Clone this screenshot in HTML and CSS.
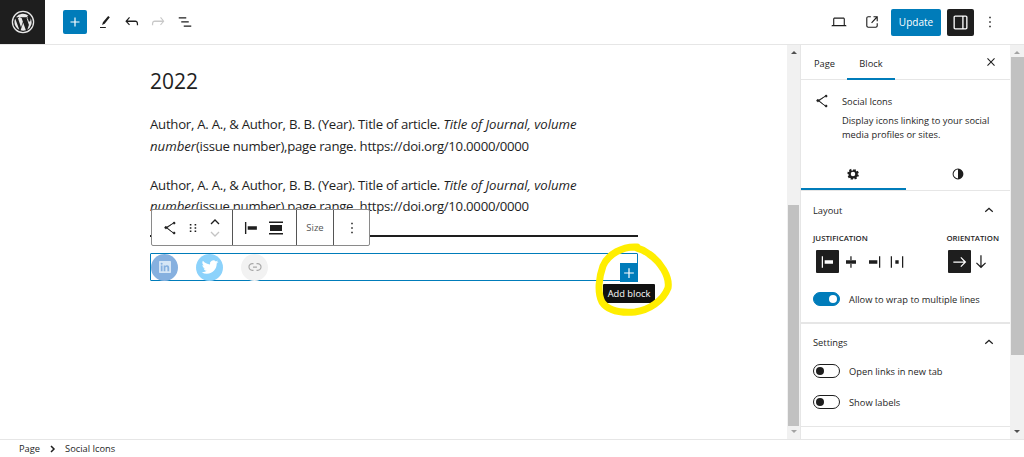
FILE: index.html
```
<!DOCTYPE html>
<html lang="en">
<head>
<meta charset="utf-8">
<title>Edit Page</title>
<link rel="stylesheet" href="styles.css">
</head>
<body>
<div class="app">
  <header class="topbar">
    <div class="logo">
      <svg width="24" height="24" viewBox="0 0 24 24"><circle cx="12" cy="12" r="10.6" fill="none" stroke="#e8e8e8" stroke-width="1.3"/><path fill="#e8e8e8" d="M3.4 12c0 3.4 2 6.3 4.9 7.7L4.2 8.5A8.6 8.6 0 0 0 3.4 12zm14.3-.4c0-1-.4-1.800-.7-2.300-.5-.7-.9-1.300-.9-2 0-.8.6-1.500 1.400-1.500h.1A8.600 8.600 0 0 0 5 7.300h.6c.9 0 2.300-.1 2.300-.1.500 0 .5.700 0 .7 0 0-.5.100-1 .1l3.100 9.300 1.900-5.600-1.300-3.700c-.5 0-.9-.1-.9-.1-.5 0-.4-.8 0-.7 0 0 1.400.1 2.300.1h2.300s1.400-.1 2.300-.1c.5 0 .5.700 0 .7 0 0-.5.100-1 .1l3.100 9.200.9-2.800c.4-1.200.6-2 .6-2.800zM12.200 12.800l-2.600 7.500a8.600 8.600 0 0 0 5.300-.1.800.8 0 0 1-.1-.2zM19.500 8c0 .3.100.6.100 1 0 .9-.2 1.800-.7 3.100l-2.600 7.600A8.600 8.600 0 0 0 19.500 8z"/></svg>
    </div>
    <div class="tools">
      <button class="inserter" aria-label="Add"><svg width="18" height="18" viewBox="0 0 24 24"><path fill="#fff" d="M11.200 6h1.600v5.200H18v1.600h-5.200V18h-1.600v-5.200H6v-1.600h5.200z"/></svg></button>
      <svg class="tool pen" viewBox="0 0 24 24"><path fill="#1e1e1e" d="M17.800 6.400l-2-1.500-6.300 7.500-1 3.100 3.100-1.300zM6 18h7v1.300H6z"/></svg>
      <svg class="tool" viewBox="0 0 24 24"><path fill="#1e1e1e" d="M18.300 11.700c-.6-.6-1.400-.9-2.300-.9H6.700l2.900-3.300-1.100-1-4.500 5L8.500 16.500l1-1-2.700-3.100H16c.5 0 .9.200 1.200.5.400.4.600 1.200.6 2.300v1.300h1.500v-1.300c0-1.500-.3-2.700-1-3.500z" transform="translate(0 -.5)"/></svg>
      <svg class="tool" viewBox="0 0 24 24"><path fill="#c8c8c8" d="M15.600 6.500l-1.100 1 2.900 3.300H8c-.9 0-1.700.3-2.300.9-.7.800-1 2-1 3.500v1.300h1.500v-1.300c0-1.100.2-1.900.6-2.300.3-.3.700-.5 1.200-.5h9.200l-2.700 3.100 1 1 4.100-5z" transform="translate(0 -.5)"/></svg>
      <svg class="tool" viewBox="0 0 24 24"><path fill="#1e1e1e" d="M5 6.200h9v1.500H5zM8 11.200h9v1.500H8zM11 16.200h9v1.500h-9z" transform="translate(-.5 0)"/></svg>
    </div>
    <div class="actions">
      <svg class="act" viewBox="0 0 24 24"><path fill="#1e1e1e" d="M20.500 16h-.7V8c0-1.100-.9-2-2-2H6.200c-1.100 0-2 .9-2 2v8h-.7c-.8 0-1.500.7-1.500 1.500h20c0-.8-.7-1.500-1.500-1.500zM5.700 8c0-.3.200-.5.500-.5h11.600c.3 0 .5.200.5.500v8H5.700z"/></svg>
      <svg class="act" viewBox="0 0 24 24"><path fill="#1e1e1e" d="M18.200 17c0 .7-.6 1.200-1.200 1.200H7c-.7 0-1.200-.6-1.200-1.200V7c0-.7.600-1.200 1.200-1.200h3.500V4.300H7C5.500 4.300 4.300 5.500 4.300 7v10c0 1.500 1.200 2.700 2.700 2.700h10c1.500 0 2.700-1.200 2.700-2.700v-3.500h-1.500zM14 4.300v1.500h3.200l-6.300 6.700 1.100 1 6.200-6.600V11h1.500V4.300z"/></svg>
      <button class="update">Update</button>
      <button class="panel" aria-label="Settings"><svg viewBox="0 0 24 24"><path fill="#fff" d="M18 4H6c-1.100 0-2 .9-2 2v12c0 1.100.9 2 2 2h12c1.100 0 2-.9 2-2V6c0-1.100-.9-2-2-2zM5.500 18V6c0-.3.200-.5.500-.5h8v13H6c-.3 0-.5-.2-.5-.5zm13 0c0 .3-.2.500-.5.500h-2.500v-13H18c.3 0 .5.200.5.500z"/></svg></button>
      <svg class="more" viewBox="0 0 24 24"><path fill="#1e1e1e" d="M11 5h2v2h-2zM11 11h2v2h-2zM11 17h2v2h-2z"/></svg>
    </div>
  </header>

  <div class="workspace">
    <main class="editor">
      <div class="canvas">
        <h2 class="heading">2022</h2>
        <p class="ref">Author, A. A., &amp; Author, B. B. (Year). Title of article. <em>Title of Journal, volume number</em>(issue number),page range. https://doi.org/10.0000/0000</p>
        <p class="ref">Author, A. A., &amp; Author, B. B. (Year). Title of article. <em>Title of Journal, volume number</em>(issue number),page range. https://doi.org/10.0000/0000</p>
        <hr class="rule">
        <div class="social">
          <span class="si li"><svg width="16" height="16" viewBox="0 0 24 24"><path fill="#d6e6f6" d="M20 3H4c-.6 0-1 .4-1 1v16c0 .6.400 1 1 1h16c.6 0 1-.4 1-1V4c0-.6-.4-1-1-1zM8.300 18.300H5.700V9.700h2.600zM7 8.600a1.500 1.500 0 1 1 0-3 1.500 1.500 0 0 1 0 3zm11.300 9.700h-2.700v-4.200c0-1 0-2.300-1.400-2.300s-1.600 1.100-1.600 2.200v4.300H10V9.700h2.500v1.200c.4-.7 1.200-1.400 2.500-1.400 2.700 0 3.300 1.800 3.300 4.100z"/></svg></span>
          <span class="si tw"><svg width="20" height="20" viewBox="0 0 24 24"><path fill="#fff" d="M22.200 5.900c-.7.300-1.500.6-2.400.7.900-.5 1.500-1.300 1.800-2.300-.8.500-1.700.8-2.600 1a4.100 4.100 0 0 0-7 3.700C8.600 8.800 5.600 7.100 3.500 4.600a4.100 4.100 0 0 0 1.300 5.500c-.7 0-1.300-.2-1.900-.5v.1c0 2 1.400 3.600 3.300 4-.6.200-1.200.2-1.800.1.500 1.600 2 2.800 3.800 2.800A8.300 8.300 0 0 1 2 18.300a11.600 11.600 0 0 0 6.300 1.800c7.500 0 11.700-6.300 11.700-11.700v-.5c.9-.6 1.600-1.300 2.200-2z"/></svg></span>
          <span class="si lk"><svg width="18" height="18" viewBox="0 0 24 24"><path fill="#a8a8a8" d="M15.600 7.200H14v1.500h1.600c2 0 3.700 1.700 3.700 3.700s-1.700 3.700-3.700 3.700H14v1.500h1.600c2.800 0 5.200-2.300 5.200-5.200 0-2.900-2.400-5.200-5.200-5.200zM4.700 12.400c0-2 1.700-3.700 3.700-3.700H10V7.200H8.400c-2.900 0-5.200 2.300-5.200 5.200 0 2.900 2.300 5.200 5.200 5.200H10v-1.500H8.400c-2 0-3.700-1.700-3.700-3.700zm4.600.9h5.300v-1.500H9.300z" transform="translate(0 -.4)"/></svg></span>
        </div>
        <div class="block-toolbar">
          <div class="group g1">
            <svg width="24" height="24" viewBox="0 0 24 24"><path fill="#1e1e1e" d="M9 11.800l6.100-4.500c.100.400.400.800 1 .800s1-.4 1-1-.4-1-1-1-1 .4-1 1v.2L8.900 11c-.2-.4-.6-.6-1-.6-.7 0-1.200.6-1.200 1.200 0 .6.500 1.200 1.200 1.200.400 0 .8-.2 1-.6l6.200 4.600v.2c0 .6.400 1 1 1s1-.4 1-1-.4-1-1-1c-.5 0-.9.300-1 .8z" stroke="#1e1e1e" stroke-width=".7"/></svg>
            <svg width="24" height="24" viewBox="0 0 24 24" class="drag"><path fill="#1e1e1e" d="M8 7h2v2H8zM14 7h2v2h-2zM8 11h2v2H8zM14 11h2v2h-2zM8 15h2v2H8zM14 15h2v2h-2z" transform="translate(12 12) scale(.8) translate(-12 -12)"/></svg>
            <div class="movers">
              <svg width="24" height="12" viewBox="0 0 24 12"><path fill="none" stroke="#1e1e1e" stroke-width="1.300" d="M8 8l4-4 4 4"/></svg>
              <svg width="24" height="12" viewBox="0 0 24 12"><path fill="none" stroke="#c4c4c4" stroke-width="1.300" d="M8 4l4 4 4-4"/></svg>
            </div>
          </div>
          <div class="group g2">
            <svg width="24" height="24" viewBox="0 0 24 24"><path fill="#1e1e1e" d="M7 5.500h1.500v13H7zM10 10h10v4H10z" transform="translate(-.5 0)"/></svg>
            <svg width="24" height="24" viewBox="0 0 24 24"><path fill="#1e1e1e" d="M5 5.500h14V7H5zM6 9h12v6H6zM5 17h14v1.500H5z"/></svg>
          </div>
          <div class="group g3">Size</div>
          <div class="group g4"><svg width="24" height="24" viewBox="0 0 24 24"><path fill="#1e1e1e" d="M11 5h2v2h-2zM11 11h2v2h-2zM11 17h2v2h-2z"/></svg></div>
        </div>
        <div class="add-btn"><svg width="24" height="24" viewBox="0 0 24 24"><path fill="#fff" d="M11.200 5.500h1.600v5.700h5.700v1.600h-5.700v5.700h-1.600v-5.700H5.500v-1.600h5.700z"/></svg></div>
        <div class="tooltip">Add block</div>
        <svg class="marker" width="82" height="74" viewBox="0 0 82 74"><path fill="none" stroke="#ffee00" stroke-width="7" stroke-linecap="round" d="M44 5C30 4 15 12 10 24 6 35 4 50 9 60c6 9 20 11 33 10 14-2 28-11 33-24 2-11-7-26-19-34-4-3-8-5-12-6"/></svg>
      </div>
    </main>
    <div class="scrollbar sb-left">
      <span class="arrow up"></span>
      <span class="thumb"></span>
      <span class="arrow down"></span>
    </div>
    <aside class="sidebar">
      <div class="tabs">
        <span class="tab">Page</span>
        <span class="tab active">Block</span>
        <svg class="close" viewBox="0 0 24 24"><path fill="#1e1e1e" d="M13 12l4.200-4.200-1-1L12 11 7.800 6.800l-1 1L11 12l-4.200 4.200 1 1L12 13l4.200 4.200 1-1z"/></svg>
      </div>
      <div class="block-card">
        <svg viewBox="0 0 24 24"><path fill="#1e1e1e" d="M9 11.800l6.100-4.500c.100.400.400.800 1 .800s1-.4 1-1-.4-1-1-1-1 .4-1 1v.2L8.900 11c-.2-.4-.6-.6-1-.6-.7 0-1.200.6-1.200 1.200 0 .6.500 1.200 1.200 1.200.400 0 .8-.2 1-.6l6.200 4.600v.2c0 .6.400 1 1 1s1-.4 1-1-.4-1-1-1c-.5 0-.9.300-1 .8z" stroke="#1e1e1e" stroke-width=".7"/></svg>
        <div class="card-text">
          <div class="card-title">Social Icons</div>
          <div class="card-desc">Display icons linking to your social media profiles or sites.</div>
        </div>
      </div>
      <div class="subtabs">
        <span class="subtab active"><svg viewBox="0 0 24 24"><path fill="#1e1e1e" d="M19.800 13.300l-1.600-.7c.1-.4.100-.8 0-1.200l1.600-.7-1.400-2.900-1.700.7c-.3-.3-.6-.6-1-.8l.3-1.700h-3.300l-.6.100-.7 1.600c-.4 0-.8 0-1.200 0L9.500 5.100 6.600 6.500l.7 1.700c-.3.300-.6.600-.8 1l-1.700-.3-.1 3.200 1.700.7c0 .4 0 .8 0 1.200l-1.500.8 1.400 2.800 1.700-.7c.3.300.6.600 1 .8l-.3 1.700h3.200l.7-1.700c.4 0 .8 0 1.200 0l.7 1.600 2.900-1.400-.7-1.700c.3-.3.600-.6.800-1l1.700.3zM12 15a3 3 0 1 1 0-6 3 3 0 0 1 0 6z"/></svg></span>
        <span class="subtab"><svg viewBox="0 0 24 24"><path fill="#1e1e1e" d="M12 5.500a6.500 6.500 0 1 0 0 13 6.500 6.500 0 0 0 0-13zM6.700 12a5.300 5.300 0 0 1 5.300-5.300v10.600A5.300 5.300 0 0 1 6.700 12z"/></svg></span>
      </div>
      <section class="panel-sec layout">
        <div class="sec-head"><span>Layout</span><svg viewBox="0 0 24 24"><path fill="#1e1e1e" d="M6.500 13.800l5.500-5 5.500 5-1 1.100-4.500-4-4.500 4z"/></svg></div>
        <div class="controls">
          <div class="ctrl">
            <div class="cap">JUSTIFICATION</div>
            <div class="btns">
              <span class="ib on"><svg viewBox="0 0 24 24"><path fill="#fff" d="M4.500 5h1.500v14H4.500zM8 10h10v4H8z"/></svg></span>
              <span class="ib"><svg viewBox="0 0 24 24"><path fill="#1e1e1e" d="M11.200 5h1.500v4.500H11.200zM6 10h12v4H6zM11.200 14.500h1.500V19H11.200z"/></svg></span>
              <span class="ib"><svg viewBox="0 0 24 24"><path fill="#1e1e1e" d="M18 5h1.500v14H18zM6 10h10v4H6z"/></svg></span>
              <span class="ib"><svg viewBox="0 0 24 24"><path fill="#1e1e1e" d="M4.500 5H6v14H4.500zM18 5h1.500v14H18zM10 10h4v4h-4z"/></svg></span>
            </div>
          </div>
          <div class="ctrl">
            <div class="cap">ORIENTATION</div>
            <div class="btns">
              <span class="ib on"><svg viewBox="0 0 24 24"><path fill="#fff" d="M13.500 6l-1 1 4.100 4.300H4v1.500h12.600L12.500 17l1 1 6-6z"/></svg></span>
              <span class="ib"><svg viewBox="0 0 24 24"><path fill="#1e1e1e" d="M18 13.500l-1-1-4.300 4.100V4h-1.500v12.600L7 12.500l-1 1 6 6z"/></svg></span>
            </div>
          </div>
        </div>
        <div class="toggle-row"><span class="toggle on"></span><span>Allow to wrap to multiple lines</span></div>
      </section>
      <section class="panel-sec settings">
        <div class="sec-head"><span>Settings</span><svg viewBox="0 0 24 24"><path fill="#1e1e1e" d="M6.500 13.800l5.500-5 5.500 5-1 1.100-4.500-4-4.500 4z"/></svg></div>
        <div class="toggle-row"><span class="toggle"></span><span>Open links in new tab</span></div>
        <div class="toggle-row"><span class="toggle"></span><span>Show labels</span></div>
      </section>
    </aside>
    <div class="scrollbar sb-right">
      <span class="arrow up pale"></span>
      <span class="thumb"></span>
      <span class="arrow down dark"></span>
    </div>
  </div>

  <footer class="crumbs">
    <span>Page</span>
    <svg width="10" height="10" viewBox="0 0 10 10"><path fill="none" stroke="#1e1e1e" stroke-width="1.500" d="M3 2l3 3-3 3"/></svg>
    <span>Social Icons</span>
  </footer>
</div>
</body>
</html>
```
FILE: styles.css
```
* { box-sizing: border-box; }
html, body { margin: 0; height: 100%; overflow: hidden; }
body { font-family: "Open Sans", "Noto Sans", sans-serif; color: #1e1e1e; background: #fff; font-size: 13px; }
svg { display: block; flex: none; }
button { border: 0; padding: 0; font: inherit; cursor: pointer; }

.app { width: 1024px; height: 457px; display: flex; flex-direction: column; }

.topbar { height: 45px; flex: none; display: flex; align-items: center; border-bottom: 1px solid #e6e6e6; }
.logo { width: 45px; height: 44px; background: #1e1e1e; display: flex; align-items: center; justify-content: center; }
.tools { display: flex; align-items: center; margin-left: 18px; }
.inserter { width: 24px; height: 24px; background: #007cba; border-radius: 2px; display: flex; align-items: center; justify-content: center; margin-right: 8px; }
.tool { width: 20px; height: 20px; margin-right: 6.500px; }
.actions { margin-left: auto; display: flex; align-items: center; }
.act { width: 18px; height: 18px; margin-right: 10px; }
.act:first-child { margin-right: 15.500px; }
.update { width: 50px; height: 27px; background: #007cba; color: #fff; font-size: 10px; border-radius: 2px; margin: 0 6px 0 0; }
.panel { width: 27px; height: 27px; background: #1e1e1e; border-radius: 2px; display: flex; align-items: center; justify-content: center; }
.panel svg { width: 21px; height: 21px; }
.more { width: 18px; height: 18px; margin: 0 25px 0 7px; }

.workspace { flex: 1; min-height: 0; display: flex; }
.editor { flex: 1; min-width: 0; background: #fff; }
.canvas { position: relative; height: 100%; padding: 21px 0 0 150px; width: 100%; }
.heading { font-size: 21px; font-weight: 400; line-height: 30px; margin: 0 0 18px; }
.ref { width: 488px; margin: 0 0 17.500px; font-size: 13.200px; letter-spacing: -0.270px; line-height: 21.500px; }
.ref em { letter-spacing: -0.020px; }
.rule { width: 488px; height: 2px; margin: 2px 0 16px; border: 0; background: #1e1e1e; }
.social { width: 488px; height: 28px; border: 1.500px solid #007cba; border-radius: 1px; display: flex; align-items: center; gap: 18px; }
.si { width: 27px; height: 27px; border-radius: 50%; display: flex; align-items: center; justify-content: center; flex: none; }
.li { background: #86b0df; }
.tw { background: #8cd2fb; }
.lk { background: #f2f2f2; }

.block-toolbar { position: absolute; left: 151px; top: 164px; height: 37px; display: flex; background: #fff; border: 1px solid #8a8a8a; border-radius: 2px; }
.group { display: flex; align-items: center; height: 100%; border-left: 1px solid #555; }
.group:first-child { border-left: 0; }
.g1 { width: 80px; padding-left: 6px; }
.g1 .drag { margin-left: -1px; }
.movers { margin-left: -2px; display: flex; flex-direction: column; }
.g2 { width: 64px; padding-left: 6px; gap: 3px; }
.g2 svg:first-child { width: 22px; }
.g3 { width: 37px; justify-content: center; font-size: 9.500px; color: #555; }
.g4 { width: 36px; justify-content: center; }
.g4 svg { width: 18px; height: 20px; }

.add-btn { position: absolute; left: 620px; top: 218px; width: 18px; height: 19px; background: #007cba; display: flex; align-items: center; justify-content: center; }
.add-btn svg { width: 18px; height: 18px; }
.tooltip { position: absolute; left: 603px; top: 239px; width: 52px; height: 19px; background: #111; color: #fff; font-size: 9.300px; line-height: 19px; text-align: center; white-space: nowrap; border-radius: 1px; }
.marker { position: absolute; left: 593px; top: 197px; }

.scrollbar { flex: none; background: #f1f1f1; display: flex; flex-direction: column; align-items: center; position: relative; }
.sb-left { width: 13px; }
.sb-right { width: 14px; }
.thumb { background: #c1c1c1; position: absolute; left: 1px; right: 1px; }
.sb-left .thumb { top: 160px; height: 221px; }
.sb-right .thumb { top: 12px; height: 298px; left: 1px; right: 0; }
.arrow { position: absolute; width: 0; height: 0; border-left: 3px solid transparent; border-right: 3px solid transparent; }
.arrow.up { top: 6px; border-bottom: 3px solid #505050; }
.arrow.down { bottom: 6px; border-top: 3px solid #a3a3a3; }
.arrow.up.pale { border-bottom-color: #a3a3a3; }
.arrow.down.dark { border-top-color: #505050; }

.sidebar { width: 210px; flex: none; display: flex; flex-direction: column; border-left: 1px solid #e6e6e6; overflow: hidden; background: #fff; }
.tabs { height: 35px; flex: none; display: flex; align-items: stretch; border-bottom: 1px solid #e6e6e6; position: relative; padding-left: 1px; }
.tab { width: 45px; display: flex; align-items: center; justify-content: center; font-size: 9.300px; height: 35px; padding-top: 2px; }
.tab.active { width: 48px; box-shadow: inset 0 -2px 0 #007cba; }
.close { position: absolute; right: 10px; top: 8px; width: 18px; height: 18px; }
.block-card { display: flex; padding: 12px 15px 0 9px; height: 78px; flex: none; gap: 8px; }
.block-card > svg { width: 24px; height: 24px; margin-top: -3px; }
.card-title { font-size: 9.300px; font-weight: 500; line-height: 14px; margin: 3px 0 5px; }
.card-desc { font-size: 9.300px; line-height: 13.500px; width: 160px; }
.subtabs { height: 33px; flex: none; display: flex; border-bottom: 1px solid #e6e6e6; }
.subtab { width: 105px; display: flex; align-items: center; justify-content: center; }
.subtab svg { width: 20px; height: 20px; }
.subtab.active svg { width: 18px; height: 18px; }
.subtab.active { box-shadow: inset 0 -2px 0 #007cba; }
.panel-sec { padding: 0 12px; border-bottom: 1px solid #e6e6e6; flex: none; }
.layout { height: 133px; border-bottom-width: 2px; }
.settings { height: 103px; }
.sec-head { display: flex; justify-content: space-between; align-items: center; height: 24px; font-size: 9.300px; }
.layout .sec-head { margin-top: 7px; }
.settings .sec-head { margin-top: 6px; }
.sec-head svg { width: 18px; height: 18px; margin-right: 0; }
.controls { display: flex; justify-content: space-between; margin-top: 10px; margin-right: -1px; }
.cap { font-size: 7.800px; font-weight: 600; line-height: 12px; }
.btns { display: flex; margin-top: 6px; }
.ib { width: 23px; height: 23px; display: flex; align-items: center; justify-content: center; border-radius: 1px; }
.ib svg { width: 20px; height: 20px; }
.ib.on { background: #1e1e1e; }
.ctrl:first-child .btns { margin-left: 3px; }
.ctrl:last-child .btns { margin-left: 2px; }
.ctrl:last-child .ib:last-child { width: 20px; }
.toggle-row { display: flex; align-items: center; gap: 9px; font-size: 9.300px; height: 14px; margin-top: 19px; }
.settings .toggle-row { margin-top: 17px; }
.settings .sec-head + .toggle-row { margin-top: 10px; }
.toggle { width: 27px; height: 14px; border: 1px solid #1e1e1e; border-radius: 7px; position: relative; flex: none; }
.toggle::after { content: ""; position: absolute; left: 2px; top: 2px; width: 8px; height: 8px; border-radius: 50%; background: #1e1e1e; }
.toggle.on { background: #007cba; border-color: #007cba; }
.toggle.on::after { left: auto; right: 2px; background: #fff; }

.crumbs { height: 18px; flex: none; border-top: 1px solid #e6e6e6; display: flex; align-items: center; gap: 7.500px; padding-left: 19px; font-size: 9.300px; background: #fff; }
```
